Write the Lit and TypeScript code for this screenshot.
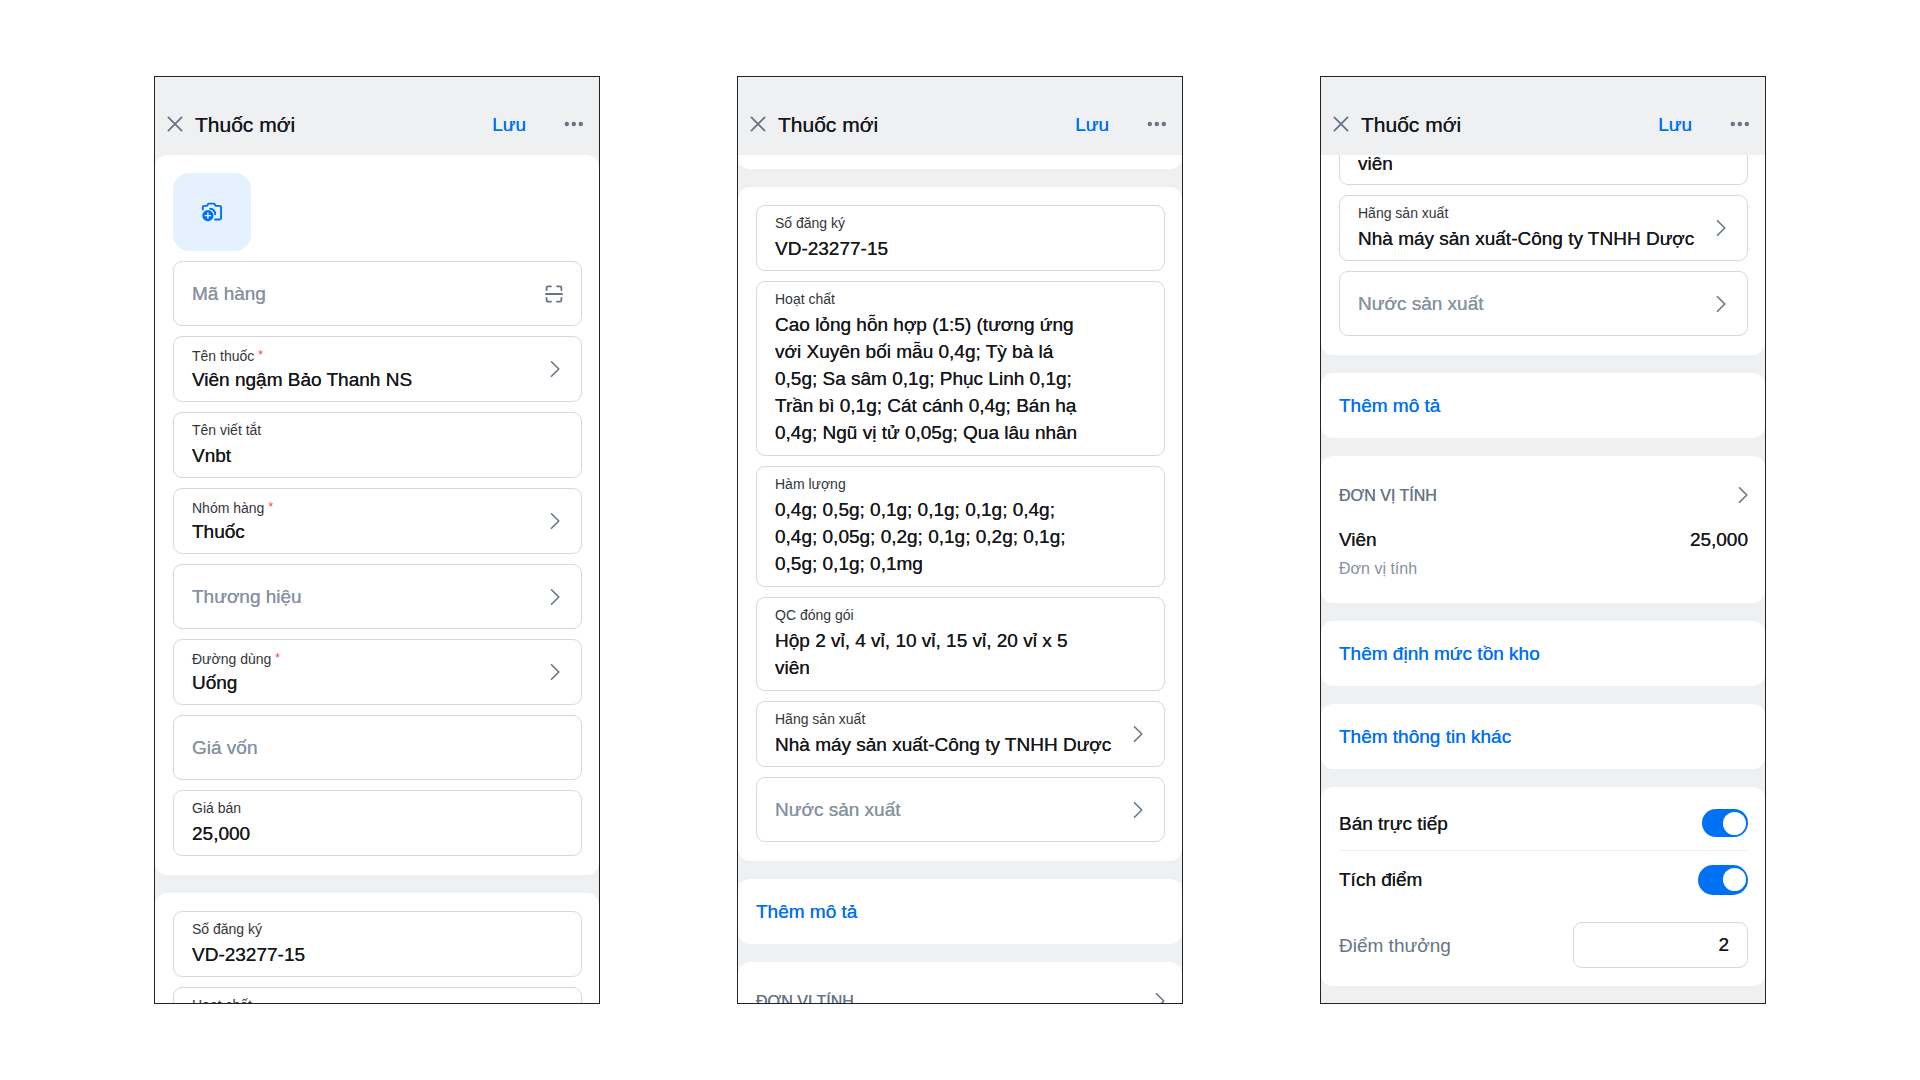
import { LitElement, html, css, svg, nothing, TemplateResult } from "lit";
import { customElement } from "lit/decorators.js";
import { classMap } from "lit/directives/class-map.js";

interface FieldOptions {
  required?: boolean;
  picker?: boolean;
  scan?: boolean;
  rows?: number;
}

const INGREDIENTS =
  "Cao lỏng hỗn hợp (1:5) (tương ứng với Xuyên bối mẫu 0,4g; Tỳ bà lá 0,5g; Sa sâm 0,1g; Phục Linh 0,1g; Trần bì 0,1g; Cát cánh 0,4g; Bán hạ 0,4g; Ngũ vị tử 0,05g; Qua lâu nhân";
const STRENGTHS =
  "0,4g; 0,5g; 0,1g; 0,1g; 0,1g; 0,4g; 0,4g; 0,05g; 0,2g; 0,1g; 0,2g; 0,1g; 0,5g; 0,1g; 0,1mg";
const PACKAGING = "Hộp 2 vỉ, 4 vỉ, 10 vỉ, 15 vỉ, 20 vỉ x 5 viên";
const MAKER = "Nhà máy sản xuất-Công ty TNHH Dược";

const chevron = html`<svg class="chevron" width="10" height="16" viewBox="0 0 10 16" aria-hidden="true">
  ${svg`<path d="M1.5 0.8 L8.8 8 L1.5 15.2" fill="none" stroke="currentColor" stroke-width="1.6" stroke-linecap="round" stroke-linejoin="round"/>`}
</svg>`;

const closeIcon = html`<svg width="16" height="16" viewBox="0 0 16 16" aria-hidden="true">
  ${svg`<path d="M1.4 1.4 L14.6 14.6 M14.6 1.4 L1.4 14.6" fill="none" stroke="currentColor" stroke-width="1.8" stroke-linecap="round"/>`}
</svg>`;

const moreIcon = html`<svg width="20" height="6" viewBox="0 0 20 6" aria-hidden="true">
  ${svg`<g fill="currentColor"><circle cx="2.8" cy="3" r="2.2"/><circle cx="9.8" cy="3" r="2.2"/><circle cx="16.8" cy="3" r="2.2"/></g>`}
</svg>`;

const scanIcon = html`<svg width="18" height="18" viewBox="0 0 18 18" aria-hidden="true">
  ${svg`<path d="M1.6 5 V2.8 Q1.6 1.3 3.1 1.3 H6 M12 1.3 H14.9 Q16.4 1.3 16.4 2.8 V5 M16.4 13 V15.2 Q16.4 16.7 14.9 16.7 H12 M6 16.7 H3.1 Q1.6 16.7 1.6 15.2 V13 M1 9 H17" fill="none" stroke="currentColor" stroke-width="1.8" stroke-linecap="round"/>`}
</svg>`;

const cameraIcon = html`<svg width="22" height="20" viewBox="0 0 22 20" aria-hidden="true">
  ${svg`<g fill="none" stroke="currentColor" stroke-width="1.9" stroke-linecap="round" stroke-linejoin="round">
    <path d="M1.8 7.6 V5.4 Q1.8 3.9 3.3 3.9 H5.4 Q6.2 3.9 6.5 3.1 L6.8 2.4 Q7.2 1.6 8 1.6 H12.6 Q13.4 1.6 13.8 2.4 L14.1 3.1 Q14.4 3.9 15.2 3.9 H18.6 Q20.1 3.9 20.1 5.4 V16 Q20.1 17.5 18.6 17.5 H14"/>
    <path d="M9.2 6.8 A5.2 5.2 0 0 1 14.2 12.2"/>
  </g>
  <circle cx="6.9" cy="13.6" r="5.6" fill="currentColor"/>
  <path d="M6.9 11 V16.2 M4.3 13.6 H9.5" stroke="#fff" stroke-width="1.3" stroke-linecap="round"/>`}
</svg>`;

@customElement("app-root")
export class AppRoot extends LitElement {
  static styles = css`
    :host {
      --blue: #0070f4;
      --ink: #16181c;
      --muted: #667486;
      --hint: #8792a2;
      --line: #d5d9e0;
      --canvas: #eff0f2;
      display: block;
      box-sizing: border-box;
      min-height: 100vh;
      background: #fff;
      color: var(--ink);
      font-family: "Liberation Sans", Arial, Helvetica, sans-serif;
      font-size: 19px;
      line-height: 27px;
    }
    *, *::before, *::after { box-sizing: border-box; }
    button, input, textarea { font: inherit; color: inherit; margin: 0; }
    button {
      border: 0;
      padding: 0;
      background: none;
      text-align: left;
      cursor: pointer;
    }
    svg { display: block; flex: none; }

    .board {
      display: grid;
      grid-template-columns: repeat(3, minmax(0, 1fr));
      gap: 137px;
      padding: 76px 154px;
    }
    .phone {
      display: flex;
      flex-direction: column;
      height: calc(100vh - 152px);
      border: 1px solid #222;
      background: var(--canvas);
      overflow: hidden;
    }
    .bar {
      display: flex;
      align-items: center;
      flex: none;
      height: 78px;
      padding: 16px 15px 0 12px;
      color: var(--muted);
    }
    .title {
      flex: 1;
      margin: 0 0 0 12px;
      color: var(--ink);
      font-size: 21px;
      font-weight: 400;
    }
    .save { margin-right: 38px; color: var(--blue); }
    .title, .save, .value, .hint, .link, .heading, .name {
      text-shadow: 0 0 0 currentColor;
    }

    .body {
      display: flex;
      flex-direction: column;
      flex: 1;
      gap: 18px;
      min-height: 0;
      overflow: hidden;
    }
    .card {
      display: flex;
      flex-direction: column;
      flex: none;
      gap: 10px;
      padding: 18px 17px 19px 18px;
      border-radius: 12px;
      background: #fff;
    }
    .card.tail { padding: 14px 0 0; border-radius: 0 0 12px 12px; }
    .card.cut { padding-top: 0; border-radius: 0 0 12px 12px; }

    .photo {
      display: flex;
      align-items: center;
      justify-content: center;
      width: 78px;
      height: 78px;
      border-radius: 16px;
      background: #e5f1ff;
      color: var(--blue);
    }

    .field {
      display: flex;
      align-items: center;
      width: 100%;
      min-height: 66px;
      padding: 8px 21px 8px 18px;
      border: 1px solid var(--line);
      border-radius: 9px;
      background: #fff;
    }
    .field.empty { min-height: 65px; }
    .field.scan { padding-right: 18px; }
    .field.multi { padding: 8px 78px 9px 18px; }
    .field.cut {
      align-items: flex-end;
      height: 30px;
      min-height: 0;
      padding: 0 18px 7px;
      border-top: 0;
      border-radius: 0 0 9px 9px;
    }
    .field svg { color: var(--muted); }
    .stack { display: flex; flex-direction: column; flex: 1; min-width: 0; }
    .label {
      display: flex;
      gap: 4px;
      padding-bottom: 3px;
      font-size: 14px;
      line-height: 18px;
      color: #33363b;
    }
    .label.required { padding: 2px 0 1px; }
    .star { font-size: 12px; line-height: 16px; color: #ff3b30; }
    .value, .hint {
      display: block;
      flex: none;
      width: 100%;
      min-width: 0;
      height: 27px;
      padding: 0;
      border: 0;
      outline: 0;
      background: none;
      white-space: nowrap;
    }
    .field.scan .hint { flex: 1; }
    textarea.value {
      height: auto;
      resize: none;
      overflow: hidden;
      white-space: pre-wrap;
    }
    .hint, .hint::placeholder { color: var(--hint); opacity: 1; }

    .card.action { padding: 19px 18px; }
    .link { color: var(--blue); }

    .card.unit { gap: 0; padding-bottom: 22px; }
    .heading {
      display: flex;
      align-items: center;
      justify-content: space-between;
      height: 42px;
      margin-bottom: 10px;
      font-size: 16px;
      color: var(--muted);
    }
    .row { display: flex; align-items: center; justify-content: space-between; }
    .note {
      margin-top: 4px;
      font-size: 16px;
      line-height: 24px;
      color: var(--hint);
    }

    .card.options { gap: 0; padding: 9px 17px 18px 18px; }
    .row.sell { height: 55px; border-bottom: 1px solid #eceef0; }
    .row.points { height: 57px; }
    .row.bonus { margin-top: 14px; color: var(--muted); }
    .switch {
      appearance: none;
      display: flex;
      align-items: center;
      justify-content: flex-end;
      width: 46px;
      height: 28px;
      margin: 0;
      padding: 0 2px;
      border-radius: 15px;
      background: var(--blue);
      cursor: pointer;
    }
    .switch::before {
      content: "";
      width: 23px;
      height: 23px;
      border-radius: 50%;
      background: #fff;
    }
    .switch:not(:checked) { justify-content: flex-start; background: var(--line); }
    .switch.large { width: 50px; height: 30px; }
    .amount {
      width: 175px;
      height: 46px;
      padding: 0 18px;
      border: 1px solid var(--line);
      border-radius: 9px;
      background: #fff;
      color: var(--ink);
      text-align: right;
      text-shadow: 0 0 0 currentColor;
    }
  `;

  private field(label: string, value: string, o: FieldOptions = {}) {
    const caption = html`<span class=${classMap({ label: true, required: !!o.required })}
      >${label}${o.required ? html`<span class="star">*</span>` : nothing}</span>`;
    if (o.picker) {
      return html`<button type="button" class="field">
        <span class="stack">${caption}<span class="value">${value}</span></span>${chevron}
      </button>`;
    }
    return html`<label class=${classMap({ field: true, multi: !!o.rows })}>
      <span class="stack">${caption}${o.rows
        ? html`<textarea class="value" rows=${o.rows} spellcheck="false" .value=${value}></textarea>`
        : html`<input class="value" type="text" .value=${value} />`}</span>
    </label>`;
  }

  private emptyField(label: string, o: FieldOptions = {}) {
    if (o.picker) {
      return html`<button type="button" class="field empty">
        <span class="stack"><span class="hint">${label}</span></span>${chevron}
      </button>`;
    }
    return html`<div class=${classMap({ field: true, empty: true, scan: !!o.scan })}>
      <input class="hint" type="text" aria-label=${label} placeholder=${label} />
      ${o.scan ? html`<button type="button" aria-label="Quét mã">${scanIcon}</button>` : nothing}
    </div>`;
  }

  private action(label: string) {
    return html`<section class="card action"><button type="button" class="link">${label}</button></section>`;
  }

  private unitHeading() {
    return html`<button type="button" class="heading">ĐƠN VỊ TÍNH${chevron}</button>`;
  }

  private phone(content: TemplateResult) {
    return html`<article class="phone">
      <header class="bar">
        <button type="button" aria-label="Đóng">${closeIcon}</button>
        <h2 class="title">Thuốc mới</h2>
        <button type="button" class="save">Lưu</button>
        <button type="button" aria-label="Thêm tùy chọn">${moreIcon}</button>
      </header>
      <div class="body">${content}</div>
    </article>`;
  }

  private general() {
    return html`
      <section class="card">
        <button type="button" class="photo" aria-label="Thêm ảnh">${cameraIcon}</button>
        ${this.emptyField("Mã hàng", { scan: true })}
        ${this.field("Tên thuốc", "Viên ngậm Bảo Thanh NS", { required: true, picker: true })}
        ${this.field("Tên viết tắt", "Vnbt")}
        ${this.field("Nhóm hàng", "Thuốc", { required: true, picker: true })}
        ${this.emptyField("Thương hiệu", { picker: true })}
        ${this.field("Đường dùng", "Uống", { required: true, picker: true })}
        ${this.emptyField("Giá vốn")}
        ${this.field("Giá bán", "25,000")}
      </section>
      <section class="card">
        ${this.field("Số đăng ký", "VD-23277-15")}
        ${this.field("Hoạt chất", "", { rows: 5 })}
      </section>`;
  }

  private registration() {
    return html`
      <section class="card tail"></section>
      <section class="card">
        ${this.field("Số đăng ký", "VD-23277-15")}
        ${this.field("Hoạt chất", INGREDIENTS, { rows: 5 })}
        ${this.field("Hàm lượng", STRENGTHS, { rows: 3 })}
        ${this.field("QC đóng gói", PACKAGING, { rows: 2 })}
        ${this.field("Hãng sản xuất", MAKER, { picker: true })}
        ${this.emptyField("Nước sản xuất", { picker: true })}
      </section>
      ${this.action("Thêm mô tả")}
      <section class="card unit">${this.unitHeading()}</section>`;
  }

  private extras() {
    return html`
      <section class="card cut">
        <div class="field cut"><input class="value" type="text" aria-label="QC đóng gói" value="viên" /></div>
        ${this.field("Hãng sản xuất", MAKER, { picker: true })}
        ${this.emptyField("Nước sản xuất", { picker: true })}
      </section>
      ${this.action("Thêm mô tả")}
      <section class="card unit">
        ${this.unitHeading()}
        <div class="row name"><span>Viên</span><span>25,000</span></div>
        <div class="note">Đơn vị tính</div>
      </section>
      ${this.action("Thêm định mức tồn kho")}
      ${this.action("Thêm thông tin khác")}
      <section class="card options">
        <label class="row sell name">Bán trực tiếp<input class="switch" type="checkbox" role="switch" checked /></label>
        <label class="row points name">Tích điểm<input class="switch large" type="checkbox" role="switch" checked /></label>
        <label class="row bonus">Điểm thưởng<input class="amount" type="text" inputmode="numeric" value="2" /></label>
      </section>`;
  }

  render() {
    return html`<main class="board">
      ${this.phone(this.general())}
      ${this.phone(this.registration())}
      ${this.phone(this.extras())}
    </main>`;
  }
}
